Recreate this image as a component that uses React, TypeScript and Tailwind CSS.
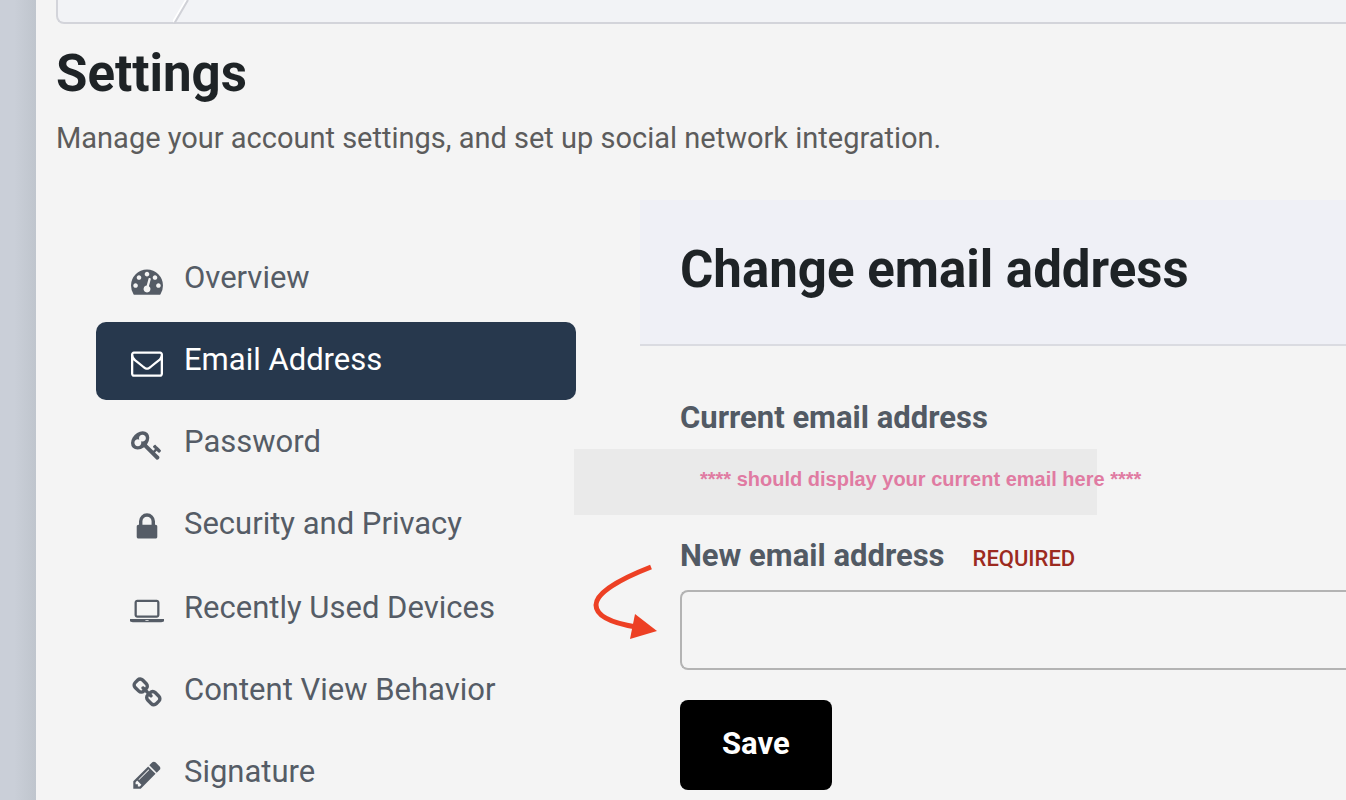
import { useState } from 'react';
import type { FormEvent } from 'react';
import clsx from 'clsx';

interface NavItem {
  label: string;
  viewBox: string;
  iconClass: string;
  path: string;
}

const accountItems: NavItem[] = [
  {
    label: 'Overview',
    viewBox: '0 0 1792 1792',
    iconClass: 'w-8 h-8',
    path: 'M384 1152q0-53-37.5-90.5t-90.5-37.5-90.5 37.5-37.5 90.5 37.5 90.5 90.5 37.5 90.5-37.5 37.5-90.5zm192-448q0-53-37.5-90.5t-90.5-37.5-90.5 37.5-37.5 90.5 37.5 90.5 90.5 37.5 90.5-37.5 37.5-90.5zm428 481l101-382q6-26-7.5-48.5t-38.5-29.5-48 6.5-30 39.5l-101 382q-60 5-107 43.5t-63 98.5q-20 77 20 146t117 89 146-20 89-117q16-60-6-117t-72-91zm660-33q0-53-37.5-90.5t-90.5-37.5-90.5 37.5-37.5 90.5 37.5 90.5 90.5 37.5 90.5-37.5 37.5-90.5zm-640-640q0-53-37.5-90.5t-90.5-37.5-90.5 37.5-37.5 90.5 37.5 90.5 90.5 37.5 90.5-37.5 37.5-90.5zm448 192q0-53-37.5-90.5t-90.5-37.5-90.5 37.5-37.5 90.5 37.5 90.5 90.5 37.5 90.5-37.5 37.5-90.5zm320 448q0 261-141 483-19 29-54 29h-1402q-35 0-54-29-141-221-141-483 0-182 71-348t191-286 286-191 348-71 348 71 286 191 191 286 71 348z',
  },
  {
    label: 'Email Address',
    viewBox: '0 0 1792 1792',
    iconClass: 'w-8 h-8',
    path: 'M1664 1504v-768q-32 36-69 66-268 206-426 338-51 43-83 67t-86.5 48.5-102.5 24.5h-2q-48 0-102.5-24.5t-86.5-48.5-83-67q-158-132-426-338-37-30-69-66v768q0 13 9.5 22.5t22.5 9.5h1472q13 0 22.5-9.5t9.5-22.5zm0-1051v-24.5l-.5-13-3-12.5-5.5-9-9-7.5-14-2.5h-1472q-13 0-22.5 9.5t-9.5 22.5q0 168 147 284 193 152 401 317 6 5 35 29.5t46 37.5 44.5 31.5 50.5 27.5 43 9h2q20 0 43-9t50.5-27.5 44.5-31.5 46-37.5 35-29.5q208-165 401-317 54-43 100.5-115.5t46.5-131.5zm128-37v1088q0 66-47 113t-113 47h-1472q-66 0-113-47t-47-113v-1088q0-66 47-113t113-47h1472q66 0 113 47t47 113z',
  },
  {
    label: 'Password',
    viewBox: '0 0 1792 1792',
    iconClass: 'w-8 h-8',
    path: 'M832 512q0-80-56-136t-136-56-136 56-56 136q0 42 19 83-41-19-83-19-80 0-136 56t-56 136 56 136 136 56 136-56 56-136q0-42-19-83 41 19 83 19 80 0 136-56t56-136zm851 704q0 17-49 66t-66 49q-9 0-28.5-16t-36.5-33-38.5-40-24.5-26l-96 96 220 220q28 28 28 68 0 42-39 81t-81 39q-40 0-68-28l-671-671q-176 131-365 131-163 0-265.5-102.5t-102.5-265.5q0-160 95-313t248-248 313-95q163 0 265.5 102.5t102.5 265.5q0 189-131 365l355 355 96-96q-3-3-26-24.5t-40-38.5-33-36.5-16-28.5q0-17 49-66t66-49q13 0 23 10 6 6 46 44.5t82 79.5 86.5 86 73 78 28.5 41z',
  },
  {
    label: 'Security and Privacy',
    viewBox: '0 0 1792 1792',
    iconClass: 'w-8 h-8',
    path: 'M640 768h512v-192q0-106-75-181t-181-75-181 75-75 181v192zm832 96v576q0 40-28 68t-68 28h-960q-40 0-68-28t-28-68v-576q0-40 28-68t68-28h32v-192q0-184 132-316t316-132 316 132 132 316v192h32q40 0 68 28t28 68z',
  },
];

const contentItems: NavItem[] = [
  {
    label: 'Recently Used Devices',
    viewBox: '0 0 1920 1792',
    iconClass: 'w-[34px] h-8',
    path: 'M416 1280q-66 0-113-47t-47-113v-704q0-66 47-113t113-47h1088q66 0 113 47t47 113v704q0 66-47 113t-113 47h-1088zm-32-864v704q0 13 9.5 22.5t22.5 9.5h1088q13 0 22.5-9.5t9.5-22.5v-704q0-13-9.5-22.5t-22.5-9.5h-1088q-13 0-22.5 9.5t-9.5 22.5zm1376 928h160v96q0 40-47 68t-113 28h-1600q-66 0-113-28t-47-68v-96h1760zm-720 96q16 0 16-16t-16-16h-160q-16 0-16 16t16 16h160z',
  },
  {
    label: 'Content View Behavior',
    viewBox: '0 0 1792 1792',
    iconClass: 'w-8 h-8',
    path: 'M1520 1216q0-40-28-68l-208-208q-28-28-68-28-42 0-72 32 3 3 19 18.5t21.5 21.5 15 19 13 25.5 3.5 27.5q0 40-28 68t-68 28q-15 0-27.5-3.5t-25.5-13-19-15-21.5-21.5-18.5-19q-33 31-33 73 0 40 28 68l206 207q27 27 68 27 40 0 68-26l147-146q28-28 28-67zm-703-705q0-40-28-68l-206-207q-28-28-68-28-39 0-68 27l-147 146q-28 28-28 67 0 40 28 68l208 208q27 27 68 27 42 0 72-31-3-3-19-18.5t-21.5-21.5-15-19-13-25.5-3.5-27.5q0-40 28-68t68-28q15 0 27.5 3.5t25.5 13 19 15 21.5 21.5 18.5 19q33-31 33-73zm895 705q0 120-85 203l-147 146q-83 83-203 83-121 0-204-85l-206-207q-83-83-83-203 0-123 88-209l-88-88q-86 88-208 88-120 0-204-84l-208-208q-84-84-84-204t85-203l147-146q83-83 203-83 121 0 204 85l206 207q83 83 83 203 0 123-88 209l88 88q86-88 208-88 120 0 204 84l208 208q84 84 84 204z',
  },
  {
    label: 'Signature',
    viewBox: '0 0 1792 1792',
    iconClass: 'w-8 h-8',
    path: 'M491 1536l91-91-235-235-91 91v107h128v128h107zm523-928q0-22-22-22-10 0-17 7l-542 542q-7 7-7 17 0 22 22 22 10 0 17-7l542-542q7-7 7-17zm-54-192l416 416-832 832h-416v-416zm683 96q0 53-37 90l-166 166-416-416 166-165q36-38 90-38 53 0 91 38l235 234q37 39 37 91z',
  },
];

function NavList({ items, active, onSelect }: {
  items: NavItem[];
  active: string;
  onSelect: (label: string) => void;
}) {
  return (
    <ul className="flex flex-col gap-1">
      {items.map((item) => (
        <li key={item.label}>
          <a
            href="#"
            aria-current={item.label === active ? 'page' : undefined}
            onClick={(e) => {
              e.preventDefault();
              onSelect(item.label);
            }}
            className={clsx(
              'flex h-[78px] items-center gap-[18px] rounded-[10px] px-8 text-[31px] leading-9',
              item.label === active ? 'bg-[#27384d] text-white' : 'text-[#555c66]'
            )}
          >
            <span className="flex w-[38px] shrink-0 justify-center pt-1">
              <svg viewBox={item.viewBox} className={clsx('shrink-0', item.iconClass)} fill="currentColor" aria-hidden="true">
                <path d={item.path} />
              </svg>
            </span>
            <span className="pb-0.5">{item.label}</span>
          </a>
        </li>
      ))}
    </ul>
  );
}

export default function App() {
  const [active, setActive] = useState('Email Address');
  const [email, setEmail] = useState('');

  const handleSubmit = (e: FormEvent) => {
    e.preventDefault();
  };

  return (
    <div className="flex min-h-screen overflow-hidden bg-[#c9cdd7] font-['Roboto',sans-serif]">
      <div className="w-9 shrink-0 bg-linear-to-r from-[#cacfd8] from-40% to-[#bfc5cd]" />

      <div className="min-w-0 flex-1 bg-[#f4f4f4] pl-5">
        {/* Breadcrumb bar */}
        <div className="h-6 rounded-bl-lg border-b-2 border-l-2 border-[#d3d4da] bg-[#f2f3f6] pl-[115px]">
          <svg width="18" height="24" viewBox="0 0 18 24" fill="none" aria-hidden="true">
            <path d="M13 0L0 22" stroke="#ffffff" strokeWidth="2" />
            <path d="M15 0L1 24" stroke="#d0d1d7" strokeWidth="2" />
          </svg>
        </div>

        <header className="pt-5">
          <h1 className="text-[51px] leading-[60px] font-bold text-[#1e2326]">Settings</h1>
          <p className="mt-4 text-[29px] leading-9 text-[#5c5c5c]">
            Manage your account settings, and set up social network integration.
          </p>
        </header>

        <div className="mt-11 flex items-start">
          <nav aria-label="Settings" className="ml-10 flex w-[480px] shrink-0 flex-col gap-1.5 pt-10">
            <NavList items={accountItems} active={active} onSelect={setActive} />
            <NavList items={contentItems} active={active} onSelect={setActive} />
          </nav>

          <main className="ml-16 min-w-0 flex-1">
            <div className="border-b-2 border-[#dadbe1] bg-[#eff0f6] px-10 pt-10 pb-11">
              <h2 className="text-[51px] leading-[60px] font-bold whitespace-nowrap text-[#1e2326]">
                Change email address
              </h2>
            </div>

            <form onSubmit={handleSubmit} className="pt-[54px] pl-10">
              <h3 className="text-[31px] leading-9 font-bold text-[#525a64]">Current email address</h3>
              <div className="mt-[13px] -ml-[106px] h-[66px] w-[523px] bg-[#eaeaea] pt-[18px] pl-[126px]">
                <p className="font-['Liberation_Sans',sans-serif] text-[20px] leading-6 font-bold whitespace-nowrap text-[#e07ba2]">
                  **** should display your current email here ****
                </p>
              </div>

              <div className="mt-[23px] flex items-baseline gap-7">
                <label htmlFor="new-email" className="text-[31px] leading-9 font-bold text-[#525a64]">
                  New email address
                </label>
                <span className="text-[22px] leading-9 font-medium text-[#9c2a20]">REQUIRED</span>
              </div>
              <div className="relative mt-[13px]">
                <input
                  id="new-email"
                  type="email"
                  required
                  value={email}
                  onChange={(e) => setEmail(e.target.value)}
                  className="block h-20 w-full rounded-l-lg border-2 border-r-0 border-[#b3b3b3] bg-transparent px-5 text-[31px] text-[#525a64]"
                />
                {/* Arrow pointing at the field */}
                <svg
                  width="72"
                  height="80"
                  viewBox="588 560 72 80"
                  fill="none"
                  className="pointer-events-none absolute -top-[30px] -left-[92px]"
                  aria-hidden="true"
                >
                  <path d="M651 567C620 579 596 593 596 605C596 616 612 623 636 627" stroke="#ed4024" strokeWidth="5" />
                  <path d="M635 614L657 631L630 639Z" fill="#ed4024" />
                </svg>
              </div>

              <button
                type="submit"
                className="mt-[30px] h-[90px] rounded-lg bg-black px-[42px] pb-0.5 text-[31px] leading-9 font-bold text-white"
              >
                Save
              </button>
            </form>
          </main>
        </div>
      </div>
    </div>
  );
}
